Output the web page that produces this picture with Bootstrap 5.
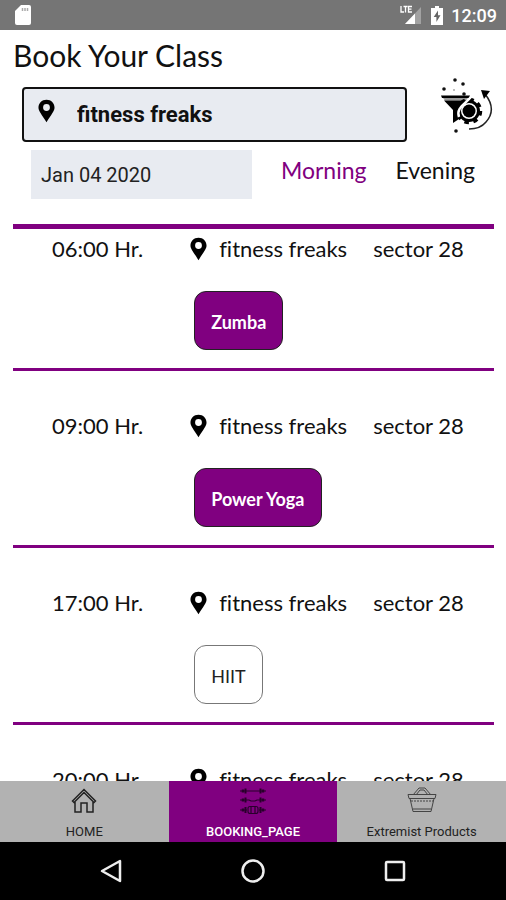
<!DOCTYPE html>
<html lang="en">
<head>
<meta charset="utf-8">
<meta name="viewport" content="width=device-width, initial-scale=1">
<title>Book Your Class</title>
<link href="https://cdn.jsdelivr.net/npm/bootstrap@5.3.0/dist/css/bootstrap.min.css" rel="stylesheet">
<style>
:root { --plum: #800080; --field: #e8ebf1; }
body { font-family: Lato, "Open Sans", sans-serif; font-variant-ligatures: none; color: #111; background: #fff; }
svg { display: block; flex-shrink: 0; }
.roboto { font-family: Roboto, sans-serif; }
.status-bar { background: #757575; color: #fff; height: 30px; font-size: 18px; padding: 0 9px 0 15px; }
.page-title { font-size: 30px; line-height: 36px; margin: 7px 13px 5px; font-weight: 400; }
.search-row { padding: 0 12px 0 22px; }
.search-box { flex: 0 1 385px; height: 55px; background: var(--field); border: 2px solid #111; border-radius: 4px; padding-left: 14px; }
.search-box input { font-weight: 700; font-size: 22px; padding: 0 0 0 22px; color: #111; }
.filter-btn { padding: 0 0 9px; }
.filter-row { padding: 0 31px 0 31px; margin-top: 8px; }
.date-input { flex: 0 0 221px; width: 221px; height: 49px; background: var(--field); font-size: 20px; padding: 0 10px; color: #222; }
.period { font-size: 23px; line-height: 28px; color: #111; padding: 6px 0 0; }
.period.chosen { color: var(--plum); }
.schedule { margin: 25px 12px 0 13px; border-top: 5px solid var(--plum); }
.slot { border-bottom: 3px solid var(--plum); padding: 41px 0 18px; }
.slot:first-child { padding-top: 6px; }
.slot-line { font-size: 22px; line-height: 28px; }
.slot-time { flex: 0 0 36%; padding-right: 4px; }
.slot-gym { width: 154px; margin-left: 12px; }
.slot-class { margin: 28px 0 0 8px; height: 59px; border-radius: 12px; border: 1px solid #222; font-size: 18px; padding: 4px 16px 0; background: var(--plum); color: #fff; font-weight: 700; }
.slot-class.open { background: #fff; color: #222; border-color: #777; font-weight: 400; }
.tab { background: #b2b2b2; color: #222; height: 61px; font-size: 13px; line-height: 16px; padding: 5px 0 2px; }
.tab.chosen { background: var(--plum); color: #fff; font-weight: 500; }
.system-bar { height: 58px; background: #000; padding: 0 8%; }
.system-bar button { line-height: 0; }
</style>
</head>
<body class="vh-100 d-flex flex-column overflow-hidden">
<svg width="0" height="0" class="position-absolute" aria-hidden="true">
  <symbol id="pin" viewBox="0 0 18 24"><path fill="#000" fill-rule="evenodd" d="M9 0C4 0 .5 3.600.5 8.300.5 12.400 4 15.500 9 24c5-8.500 8.500-11.600 8.500-15.700C17.500 3.600 14 0 9 0Zm0 4.700a3.600 3.600 0 1 1 0 7.200 3.600 3.600 0 0 1 0-7.200Z"/></symbol>
</svg>

<header class="status-bar roboto d-flex align-items-center justify-content-between flex-shrink-0">
  <svg width="16" height="20" viewBox="0 0 16 20"><path fill="#fff" d="M6 0h8a2 2 0 0 1 2 2v16a2 2 0 0 1-2 2H2a2 2 0 0 1-2-2V6Z"/><path stroke="#aaa" stroke-width="1.500" d="M7.500 3v3M10 3v3M12.500 3v3"/></svg>
  <div class="d-flex align-items-center">
    <svg width="23" height="20" viewBox="0 0 23 20"><path fill="#a2a2a2" d="M21 2v17H5Z"/><path fill="#fff" d="M15 8.400V19H5Z"/><path fill="none" stroke="#fff" stroke-width="1.300" d="M1 1v6h3M3.500 1.500h4M5.500 1.500v6M12 1.500H8.500v5.500H12M8.500 4.200h3"/></svg>
    <svg class="ms-2" width="12" height="19" viewBox="0 0 12 19"><path fill="#fff" d="M4 0h4v2h4v17H0V2h4Z"/><path fill="#666" d="M7 4.500 2.700 11h2.700v5L9.500 9.300H7Z"/></svg>
    <span class="fw-medium ms-2">12:09</span>
  </div>
</header>

<main class="flex-grow-1 overflow-hidden">
  <h1 class="page-title">Book Your Class</h1>
  <div class="search-row d-flex align-items-end justify-content-between">
    <label class="search-box d-flex align-items-center">
      <svg class="mb-2" width="17" height="24" role="img" aria-label="Location"><use href="#pin"/></svg>
      <input class="roboto border-0 bg-transparent w-100" type="text" value="fitness freaks" aria-label="Gym">
    </label>
    <button type="button" class="filter-btn border-0 bg-transparent" aria-label="Filters">
      <svg width="54" height="55" viewBox="0 0 54 55">
        <path fill="#000" d="M1 17.500h29l-1 2.500H2Z"/><path fill="#999" d="M3 20h25l-2 2.500H5Z"/>
        <path fill="#000" d="M4 22.500h23L19 32v9l-6 4V32Z"/>
        <g fill="#111"><circle cx="15" cy="2" r="1.800"/><circle cx="23" cy="6" r="1.800"/><circle cx="4" cy="11" r="1.800"/><circle cx="24" cy="16" r="1.800"/><circle cx="16" cy="53" r="1.800"/></g><circle cx="14" cy="12" r="1" fill="#aaa"/>
        <circle cx="29" cy="33" r="11.500" fill="none" stroke="#000" stroke-width="3.500" stroke-dasharray="4.500 4.530"/>
        <circle cx="29" cy="33" r="9.500" fill="#fff" stroke="#000" stroke-width="3"/><circle cx="29" cy="33" r="6.500" fill="#000"/>
        <path fill="none" stroke="#fff" stroke-width="2.500" d="M19 39c-3-9 5-12 12-20"/>
        <path fill="none" stroke="#222" stroke-width="1.500" d="M45 16c8 10 8 20 1 28-4 5-9 7-17 7"/><path fill="#000" d="m41 12 9 1-6 8Z"/>
      </svg>
    </button>
  </div>
  <div class="filter-row d-flex align-items-start justify-content-between">
    <input class="date-input roboto border-0" type="text" value="Jan 04 2020" aria-label="Date">
    <button type="button" class="period chosen border-0 bg-transparent">Morning</button>
    <button type="button" class="period border-0 bg-transparent">Evening</button>
  </div>

  <section class="schedule" aria-label="Classes">
    <article class="slot">
      <div class="slot-line d-flex align-items-center text-nowrap"><div class="slot-time text-center">06:00 Hr.</div><svg class="ms-1" width="17" height="24"><use href="#pin"/></svg><div class="slot-gym">fitness freaks</div><div>sector 28</div></div>
      <div class="d-flex"><div class="slot-time"></div><button type="button" class="slot-class">Zumba</button></div>
    </article>
    <article class="slot">
      <div class="slot-line d-flex align-items-center text-nowrap"><div class="slot-time text-center">09:00 Hr.</div><svg class="ms-1" width="17" height="24"><use href="#pin"/></svg><div class="slot-gym">fitness freaks</div><div>sector 28</div></div>
      <div class="d-flex"><div class="slot-time"></div><button type="button" class="slot-class">Power Yoga</button></div>
    </article>
    <article class="slot">
      <div class="slot-line d-flex align-items-center text-nowrap"><div class="slot-time text-center">17:00 Hr.</div><svg class="ms-1" width="17" height="24"><use href="#pin"/></svg><div class="slot-gym">fitness freaks</div><div>sector 28</div></div>
      <div class="d-flex"><div class="slot-time"></div><button type="button" class="slot-class open">HIIT</button></div>
    </article>
    <article class="slot">
      <div class="slot-line d-flex align-items-center text-nowrap"><div class="slot-time text-center">20:00 Hr.</div><svg class="ms-1" width="17" height="24"><use href="#pin"/></svg><div class="slot-gym">fitness freaks</div><div>sector 28</div></div>
    </article>
  </section>
</main>

<nav class="row g-0 roboto flex-shrink-0" aria-label="Main">
  <a href="#home" class="tab col d-flex flex-column align-items-center justify-content-between text-decoration-none">
    <svg width="26" height="28" viewBox="0 0 26 28" fill="none" stroke="#222" stroke-width="1.500"><path d="M1.500 15 13 3.500 24.500 15l-1.500 1.500-10-10-10 10ZM4 15.500V26h6v-9h6v9h6V15.500"/></svg>HOME</a>
  <a href="#booking" class="tab chosen col d-flex flex-column align-items-center justify-content-between text-decoration-none" aria-current="page">
    <svg width="28" height="28" viewBox="0 0 28 28" fill="none" stroke="#28002b" stroke-width="1.200"><path d="M1 5h26M1 14h9l2 1h4l2-1h9M1 24h7M20 24h7"/><path stroke-width="2.500" d="M4 3.500v3M24 3.500v3M4 12.500v3M24 12.500v3M4 22.500v3M24 22.500v3"/><path stroke-width="2" d="M6.500 2.500v5M21.500 2.500v5M6.500 11.500v5M21.500 11.500v5M6.500 21v6M21.500 21v6"/><rect x="9" y="20.500" width="10" height="7" rx="2"/><path d="M12 21v6M16 21v6"/></svg>BOOKING_PAGE</a>
  <a href="#products" class="tab col d-flex flex-column align-items-center justify-content-between text-decoration-none">
    <svg width="32" height="28" viewBox="0 0 32 28" fill="none" stroke="#444"><path d="M2 8.500h28l-1 4H3ZM4 12.500l3 13h18l3-13M7 23h18M7 9l6-7h6l6 7M10 9l4-5h4l4 5"/><path stroke-dasharray="2 1" d="M5 15h22"/></svg>Extremist Products</a>
</nav>
<footer class="system-bar d-flex justify-content-around align-items-center flex-shrink-0">
  <button type="button" class="btn p-0 border-0" aria-label="Back"><svg width="24" height="26" viewBox="0 0 24 26"><path fill="none" stroke="#eee" stroke-width="2.500" stroke-linejoin="round" d="M21 3v20L3 13Z"/></svg></button>
  <button type="button" class="btn p-0 border-0" aria-label="Home"><svg width="26" height="26" viewBox="0 0 26 26"><circle cx="13" cy="13" r="10.500" fill="none" stroke="#eee" stroke-width="2.500"/></svg></button>
  <button type="button" class="btn p-0 border-0" aria-label="Recent apps"><svg width="24" height="26" viewBox="0 0 24 26"><rect x="3" y="4" width="18" height="18" rx="1" fill="none" stroke="#eee" stroke-width="2.500"/></svg></button>
</footer>
<script src="https://cdn.jsdelivr.net/npm/bootstrap@5.3.0/dist/js/bootstrap.bundle.min.js"></script>
</body>
</html>
